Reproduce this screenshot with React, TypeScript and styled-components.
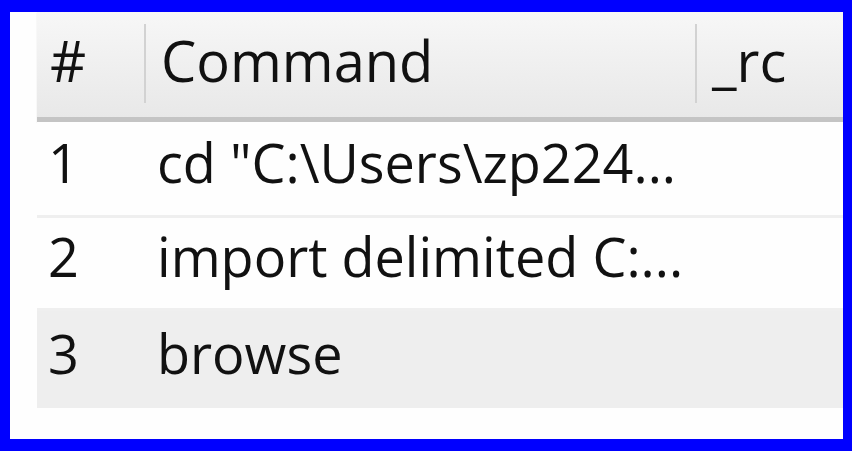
import React from 'react'
import styled, { createGlobalStyle } from 'styled-components'

const rows = [
  { id: 1, command: 'cd "C:\\Users\\zp224...', rc: '' },
  { id: 2, command: 'import delimited C:...', rc: '' },
  { id: 3, command: 'browse', rc: '' },
]

export default function App() {
  return (
    <>
      <Global />
      <Frame>
        <Table>
          <HeaderRow>
            <HeadCell>#</HeadCell>
            <HeadCell $divider>Command</HeadCell>
            <HeadCell $divider>_rc</HeadCell>
          </HeaderRow>
          {rows.map((r, i) => (
            <Row key={r.id} $shaded={i === 2} $last={i === rows.length - 1}>
              <Cell>{r.id}</Cell>
              <Cell>{r.command}</Cell>
              <Cell>{r.rc}</Cell>
            </Row>
          ))}
        </Table>
      </Frame>
    </>
  )
}

const Global = createGlobalStyle`
  html, body { margin: 0; padding: 0; background: #0000ff; }
  body { font-family: "Open Sans", "Noto Sans", sans-serif; }
`

const Frame = styled.div`
  box-sizing: border-box;
  width: 852px;
  height: 451px;
  border-style: solid;
  border-color: #0000ff;
  border-width: 12px 9px 12px 10px;
  background: #fefefe;
  padding-left: 27px;
  overflow: hidden;
`

const Table = styled.div`
  display: flex;
  flex-direction: column;
`

const cols = `107px 551px 1fr`

const HeaderRow = styled.div`
  display: grid;
  grid-template-columns: ${cols};
  height: 105px;
  background: linear-gradient(#f7f7f7, #e8e8e8);
  border-bottom: 5px solid #c4c4c4;
  box-shadow: 0 1px 1px #dcdcdc;
`

const HeadCell = styled.div<{ $divider?: boolean }>`
  display: flex;
  align-items: center;
  padding-left: ${p => (p.$divider ? 17 : 13)}px;
  padding-bottom: 10px;
  font-size: 56px;
  color: #111;
  position: relative;
  ${p =>
    p.$divider &&
    `
    &::before {
      content: '';
      position: absolute;
      left: 0;
      top: 12px;
      bottom: 14px;
      width: 2px;
      background: #d2d2d2;
    }
  `}
`

const Row = styled.div<{ $shaded?: boolean; $last?: boolean }>`
  display: grid;
  grid-template-columns: ${cols};
  height: ${p => (p.$last ? 100 : 93)}px;
  box-sizing: border-box;
  background: ${p => (p.$shaded ? '#eeeeee' : '#fefefe')};
  & + & {
    border-top: 3px solid #efefef;
  }
`

const Cell = styled.div`
  display: flex;
  align-items: center;
  padding-left: 11px;
  padding-bottom: 14px;
  font-size: 54px;
  letter-spacing: 0px;
  color: #111;
  white-space: nowrap;
  overflow: hidden;
  &:nth-child(2) {
    padding-left: 13px;
  }
`
